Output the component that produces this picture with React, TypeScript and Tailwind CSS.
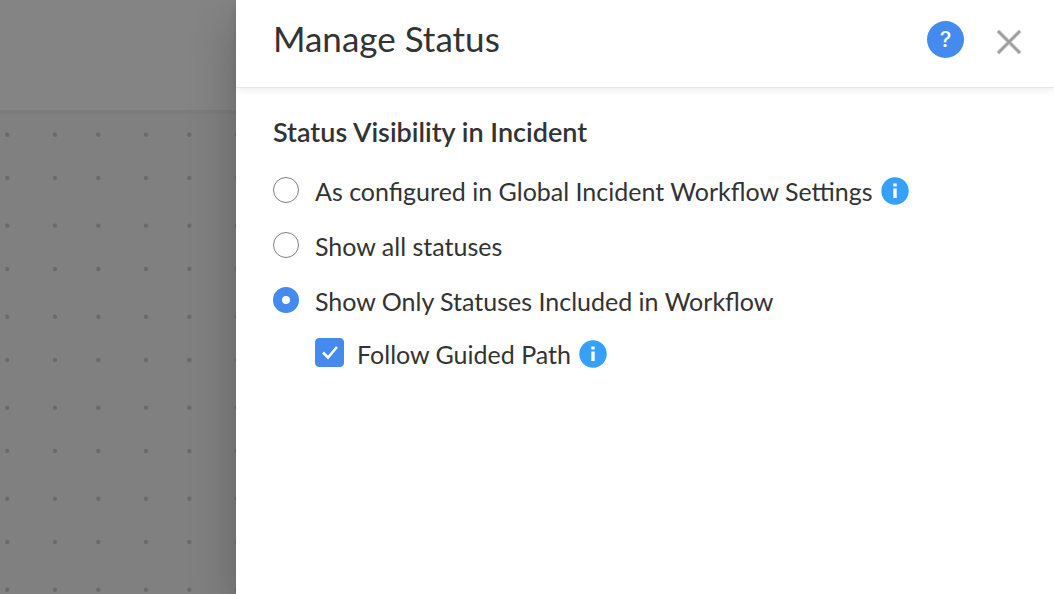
import { useState } from "react";

const visibilityOptions = [
  {
    id: "global",
    label: "As configured in Global Incident Workflow Settings",
    hasInfo: true,
  },
  { id: "all", label: "Show all statuses", hasInfo: false },
  {
    id: "included",
    label: "Show Only Statuses Included in Workflow",
    hasInfo: false,
  },
];

const InfoIcon = () => {
  return (
    <svg
      viewBox="0 0 28 28"
      className="size-7 shrink-0"
      role="img"
      aria-label="More information"
    >
      <circle cx="14" cy="14" r="13.7" fill="#33a1fd" />
      <rect x="12.3" y="6.5" width="3.4" height="3" fill="#fff" />
      <rect x="12.3" y="11.5" width="3.4" height="9.5" fill="#fff" />
    </svg>
  );
};

const CanvasBackdrop = () => {
  return (
    <div className="flex w-[236px] shrink-0 flex-col bg-[#808080]">
      <div className="h-[110px] bg-[#848484]" />
      <div className="flex grow flex-col border-t-4 border-[#7c7c7c]">
        <svg className="h-0 w-full grow" aria-hidden="true">
          <defs>
            <pattern
              id="dots"
              width="91"
              height="91"
              patternUnits="userSpaceOnUse"
            >
              <g fill="#6a6a6a">
                <circle cx="7.3" cy="20.7" r="2.2" />
                <circle cx="55" cy="20.7" r="2.2" />
                <circle cx="7.3" cy="64" r="2.2" />
                <circle cx="55" cy="64" r="2.2" />
              </g>
            </pattern>
          </defs>
          <rect width="100%" height="100%" fill="url(#dots)" />
        </svg>
      </div>
    </div>
  );
};

const PanelHeader = () => {
  return (
    <header className="flex h-[88px] items-center justify-between border-b border-[#e8e8e8] pr-8 pb-2 pl-[37px] shadow-[0_2px_8px_rgba(0,0,0,0.08)]">
      <h1 className="pb-1 text-[35px] leading-10">Manage Status</h1>
      <div className="flex items-center gap-8">
        <button
          type="button"
          aria-label="Help"
          className="flex size-[37px] items-center justify-center rounded-full bg-[#448aef] font-['Inter',sans-serif] text-[22px] font-medium text-white"
        >
          ?
        </button>
        <button type="button" aria-label="Close" className="pt-1">
          <svg viewBox="0 0 26 26" className="size-[26px]">
            <path
              d="M2 2 24 24M24 2 2 24"
              fill="none"
              stroke="#c8c8c8"
              strokeWidth="4"
            />
            <path
              d="M2 2 24 24M24 2 2 24"
              fill="none"
              stroke="#9c9c9c"
              strokeWidth="2"
            />
          </svg>
        </button>
      </div>
    </header>
  );
};

export default function App() {
  const [visibility, setVisibility] = useState("included");
  const [guided, setGuided] = useState(true);

  return (
    <div className="flex min-h-screen overflow-hidden bg-white font-['Lato',sans-serif] text-[#333]">
      <CanvasBackdrop />
      <main className="relative min-w-0 flex-1 bg-white shadow-[0_20px_44px_rgba(0,0,0,0.24)]">
        <PanelHeader />
        <fieldset className="px-[37px] pt-7">
          <legend className="float-left w-full text-[27px] leading-8 font-semibold">
            Status Visibility in Incident
          </legend>
          <div className="clear-both flex flex-col gap-[23px] pt-[27px]">
            {visibilityOptions.map((option) => (
              <div key={option.id} className="flex items-center gap-2">
                <label className="flex items-center gap-4 text-[25px] leading-8">
                  <input
                    type="radio"
                    name="visibility"
                    value={option.id}
                    checked={visibility === option.id}
                    onChange={() => setVisibility(option.id)}
                    className="mb-0.5 size-[26px] shrink-0 appearance-none rounded-full border border-[#808080] bg-white checked:border-9 checked:border-[#448aef]"
                  />
                  {option.label}
                </label>
                {option.hasInfo && <InfoIcon />}
              </div>
            ))}
          </div>
          <div className="flex items-center gap-2 pt-[21px] pl-[42px]">
            <label className="flex items-center gap-[13px] text-[25px] leading-8">
              <span className="mb-[3px] grid size-[29px] shrink-0">
                <input
                  type="checkbox"
                  checked={guided}
                  onChange={(e) => setGuided(e.target.checked)}
                  className="peer col-start-1 row-start-1 appearance-none rounded-sm border border-[#808080] checked:border-[#448aef] checked:bg-[#448aef]"
                />
                <svg
                  viewBox="0 0 29 29"
                  className="pointer-events-none invisible col-start-1 row-start-1 peer-checked:visible"
                >
                  <path
                    d="M8 14.5 13 19.5 22 9"
                    fill="none"
                    stroke="#fff"
                    strokeWidth="2.6"
                  />
                </svg>
              </span>
              Follow Guided Path
            </label>
            <InfoIcon />
          </div>
        </fieldset>
      </main>
    </div>
  );
}
